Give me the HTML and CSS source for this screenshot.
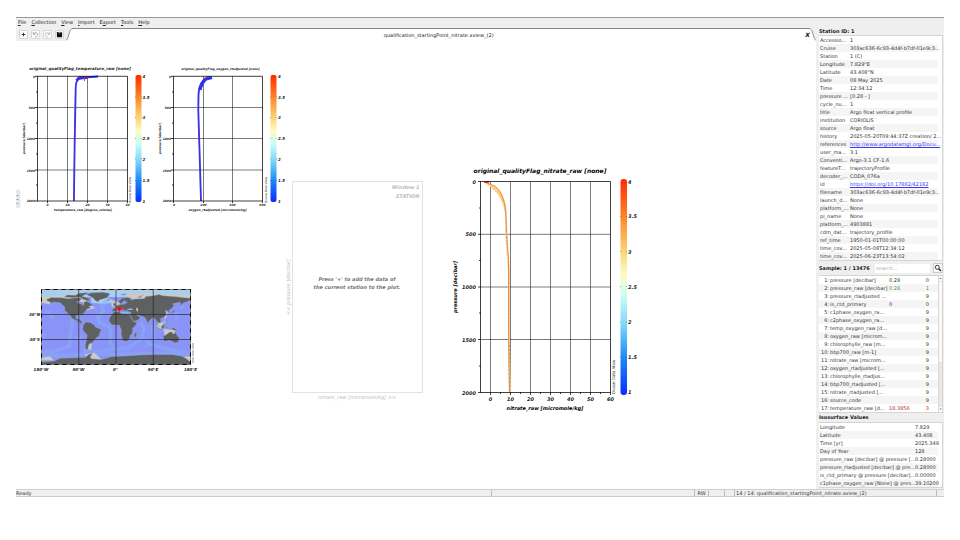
FILE: index.html
```
<!DOCTYPE html>
<html lang="en">
<head>
<meta charset="utf-8">
<title>qualification_startingPoint_nitrate.xview_(2)</title>
<link rel="stylesheet" href="styles.css">
</head>
<body>
<div class="app">
  <nav class="menubar">
    <a href="#"><u>F</u>ile</a><a href="#"><u>C</u>ollection</a><a href="#"><u>V</u>iew</a><a href="#"><u>I</u>mport</a><a href="#">E<u>x</u>port</a><a href="#"><u>T</u>ools</a><a href="#"><u>H</u>elp</a>
  </nav>
  <div class="work">
    <main class="main">
      <div class="toolbar">
        <button class="tool" aria-label="New"><svg viewBox="0 0 8 8"><path d="M4 2v4M2 4h4" stroke="#222" fill="none"/></svg></button>
        <button class="tool" aria-label="Undo"><svg viewBox="0 0 8 8"><path d="M2 3.600C3 1.200 6.500 1.600 6.500 4S4.500 6.800 3.500 6.800M1.500 1.300v2.500h2.500" stroke="#888" stroke-width=".8" fill="none"/></svg></button>
        <button class="tool" aria-label="Redo"><svg viewBox="0 0 8 8"><path d="M6 3.600C5 1.200 1.500 1.600 1.500 4S3.500 6.800 4.500 6.800M6.500 1.300v2.500h-2.500" stroke="#a8a8a8" stroke-width=".8" fill="none"/></svg></button>
        <button class="tool" aria-label="Save"><svg viewBox="0 0 8 8"><path d="M1 1h5l1 1v5H1z" fill="#111"/><path d="M2.700 1h2.600v1.600H2.700z" fill="#999"/></svg></button>
        <svg class="slope" viewBox="0 0 6 13"><path d="M0 13Q2 11 3 5T6 .5V13z" fill="#fff"/><path d="M0 12.500Q2 11 3 6T6 .5" fill="none" stroke="#777" stroke-width=".8"/></svg>
        <div class="tab"><span>qualification_startingPoint_nitrate.xview_(2)</span><button class="close" aria-label="Close view">X</button></div>
        <svg class="slope" viewBox="0 0 6 13"><path d="M6 13Q4 11 3 5T0 .5V13z" fill="#fff"/><path d="M6 12.500Q4 11 3 6T0 .5" fill="none" stroke="#777" stroke-width=".8"/></svg>
      </div>
      <svg class="canvas" viewBox="16 41 800 448" role="img" aria-label="Station plots and map">
        <defs>
          <linearGradient id="flag" x1="0" y1="0" x2="0" y2="1">
            <stop offset="0" stop-color="#ff2a00"/><stop offset=".17" stop-color="#fb8428"/><stop offset=".33" stop-color="#fbd273"/><stop offset=".44" stop-color="#fdfbc4"/><stop offset=".54" stop-color="#c8fff5"/><stop offset=".67" stop-color="#80d8fb"/><stop offset=".83" stop-color="#1a8af5"/><stop offset="1" stop-color="#0a2cff"/>
          </linearGradient>
        </defs>

        <!-- temperature -->
        <g class="plot small">
          <text class="title" x="80" y="70">original_qualityFlag_temperature_raw [none]</text>
          <path class="grid" d="M47.500 76v125M67.500 76v125M87.500 76v125M107.500 76v125M37.500 107.500h90M37.500 138.500h90M37.500 170h90"/>
          <path d="M98 76.500L84 77.500L79 79Q75.900 80 75.700 88L74.700 140L73.900 201" class="blue"/>
          <path d="M87 77.500L79 78L76.500 80.500" class="blue wide"/>
          <path d="M90 77H79Q75.500 79 75.500 88L74.800 120L74.100 201M84.500 76v5" class="redline"/>
          <path d="M79 76.500h11M84.500 76v5" class="redpeak"/>
          <path class="frame" d="M37.500 76.300h90v124.700h-90zM35 76.300h3M35 107.500h3M35 138.500h3M35 170h3M35 201h3M36 92h2M36 123h2M36 154h2M36 185h2M47.500 201v2M67.500 201v2M87.500 201v2M107.500 201v2M127.500 201v2"/>
          <g class="ylab"><text x="35" y="77.500">0</text><text x="35" y="109">500</text><text x="35" y="140">1000</text><text x="35" y="171.500">1500</text><text x="35" y="202">2000</text></g>
          <g class="xlab"><text x="47.500" y="206">0</text><text x="67.500" y="206">10</text><text x="87.500" y="206">20</text><text x="107.500" y="206">30</text><text x="127.500" y="206">40</text></g>
          <text class="axis" x="83" y="211">temperature_raw [degree_celsius]</text>
          <text class="axis" transform="translate(25 138.500) rotate(-90)">pressure [decibar]</text>
          <text class="credit" transform="translate(131 190) rotate(-90)">Ocean Data View</text>
          <rect class="bar" x="135.500" y="75" width="6" height="127" rx="2"/>
          <path class="ticks" d="M135 97h7M135 117.500h7M135 138.500h7M135 159h7M135 180.500h7"/>
          <g class="clab"><text x="142.500" y="78">4</text><text x="142.500" y="98.500">3.5</text><text x="142.500" y="119">3</text><text x="142.500" y="140">2.5</text><text x="142.500" y="161">2</text><text x="142.500" y="182">1.5</text><text x="142.500" y="202.500">1</text></g>
        </g>

        <!-- oxygen -->
        <g class="plot small">
          <text class="title minor" x="220.500" y="70">original_qualityFlag_oxygen_rtadjusted [none]</text>
          <path class="grid" d="M203.500 76v125M232.500 76v125M173.500 107.500h89M173.500 138.500h89M173.500 170h89"/>
          <path d="M209 76.500Q198.800 81 198.500 94L198.300 110L199.500 150L201 201" class="blue"/>
          <path d="M212 77.500L206 79Q202 82 200 90" class="blue wide"/>
          <path d="M209 77Q199.500 82 198.800 95L198.300 115L199.500 150L200.800 201" class="redline"/>
          <path d="M205 77.500L210 76.500" class="redpeak"/>
          <path class="frame" d="M173.500 76.300h89v124.700h-89zM171 76.300h3M171 107.500h3M171 138.500h3M171 170h3M171 201h3M172 92h2M172 123h2M172 154h2M172 185h2M173.500 201v2M203.500 201v2M232.500 201v2M262.500 201v2"/>
          <g class="ylab"><text x="171" y="77.500">0</text><text x="171" y="109">500</text><text x="171" y="140">1000</text><text x="171" y="171.500">1500</text><text x="171" y="202">2000</text></g>
          <g class="xlab"><text x="174" y="206">0</text><text x="203.500" y="206">200</text><text x="232.500" y="206">400</text><text x="262.500" y="206">600</text></g>
          <text class="axis" x="217.500" y="211">oxygen_rtadjusted [micromole/kg]</text>
          <text class="axis" transform="translate(160.500 138.500) rotate(-90)">pressure [decibar]</text>
          <text class="credit" transform="translate(266.500 190) rotate(-90)">Ocean Data View</text>
          <rect class="bar" x="270.500" y="75" width="6" height="127" rx="2"/>
          <path class="ticks" d="M270 97h7M270 117.500h7M270 138.500h7M270 159h7M270 180.500h7"/>
          <g class="clab"><text x="278" y="78">4</text><text x="278" y="98.500">3.5</text><text x="278" y="119">3</text><text x="278" y="140">2.5</text><text x="278" y="161">2</text><text x="278" y="182">1.5</text><text x="278" y="202.500">1</text></g>
        </g>

        <!-- empty plot window -->
        <g class="ghost">
          <rect x="292.500" y="181.500" width="130" height="211" fill="none" stroke="#e2e2e2"/>
          <text class="end" x="419.500" y="189">Window 1</text>
          <text class="end" x="419.500" y="198">STATION</text>
          <text class="hint" x="357" y="280.500">Press '+' to add the data of</text>
          <text class="hint" x="357" y="288.500">the current station to the plot.</text>
          <text class="name" x="357" y="399">nitrate_raw [micromole/kg] &gt;&gt;</text>
          <text class="name" transform="translate(289.500 287) rotate(-90)">&lt;&lt; pressure [decibar]</text>
        </g>

        <!-- nitrate -->
        <g class="plot large">
          <text class="title" x="540" y="173">original_qualityFlag_nitrate_raw [none]</text>
          <path class="grid" d="M490.500 182v210M510.500 182v210M530.500 182v210M550.500 182v210M570.500 182v210M590.500 182v210M480.500 234.300h130M480.500 287h130M480.500 339.500h130"/>
          <path d="M486 182.500Q489 186 494 188.500Q502 198 505.500 213Q507 201 500.500 191Q496 185 486 182.500z" fill="#f6dc85"/>
          <path d="M487 183L492 187Q505 198 506 215L506.500 240L509 270L509 345L510 392" fill="none" stroke="#f8cf85" stroke-width="2" stroke-dasharray="3 .5"/>
          <path d="M485 182.500L495 186Q504 194 505.500 210L507 240L508.500 260L508.600 345L509.500 392" fill="none" stroke="#ee7442" stroke-width=".8"/>
          <path d="M509.300 345V392" stroke="#bda550" stroke-width="1" stroke-dasharray="2 2"/>
          <path d="M484 182h5" stroke="#f33a20" stroke-width="2"/>
          <path class="frame" d="M480.500 181.500h130v211h-130zM478 181.500h3M478 234.300h3M478 287h3M478 339.500h3M478 392.500h3M479 208h2M479 260.500h2M479 313h2M479 366h2M490.500 392v3M500.500 392v2M510.500 392v3M520.500 392v2M530.500 392v3M540.500 392v2M550.500 392v3M560.500 392v2M570.500 392v3M580.500 392v2M590.500 392v3M600.500 392v2M610.500 392v3"/>
          <g class="ylab"><text x="476" y="183.500">0</text><text x="476" y="236">500</text><text x="476" y="289">1000</text><text x="476" y="341.500">1500</text><text x="476" y="394.500">2000</text></g>
          <g class="xlab"><text x="490.500" y="400.500">0</text><text x="510.500" y="400.500">10</text><text x="530.500" y="400.500">20</text><text x="550.500" y="400.500">30</text><text x="570.500" y="400.500">40</text><text x="590.500" y="400.500">50</text><text x="610.500" y="400.500">60</text></g>
          <text class="axis" x="545" y="409.500">nitrate_raw [micromole/kg]</text>
          <text class="axis" transform="translate(456.500 287) rotate(-90)">pressure [decibar]</text>
          <text class="credit" transform="translate(615 377) rotate(-90)">Ocean Data View</text>
          <rect class="bar" x="620.500" y="179" width="6.500" height="216" rx="3"/>
          <path class="ticks" d="M620 216.500h8M620 251.500h8M620 286.500h8M620 322h8M620 357h8"/>
          <g class="clab"><text x="628" y="183.500">4</text><text x="628" y="218">3.5</text><text x="628" y="253.500">3</text><text x="628" y="288.500">2.5</text><text x="628" y="324">2</text><text x="628" y="359">1.5</text><text x="628" y="394">1</text></g>
        </g>

        <!-- world map, drawn in degrees -->
        <svg x="41.500" y="289.500" width="149" height="75" viewBox="-180 -90 360 180" preserveAspectRatio="none">
          <rect x="-180" y="-90" width="360" height="180" fill="#8a93f8"/>
          <path d="M-180 -90H180V-72H-180zM-60 -70L-20 -70L0 -60L-30 -55L-60 -58z" fill="#a9cfee"/>
          <g fill="none" stroke="#86aef6" stroke-width="9" stroke-linejoin="round" opacity=".5">
            <path d="M-20 -65L-35 -52L-30 -38L-44 -25L-42 -12L-15 0L-13 20L-14 40L-5 54L30 50L60 30L68 5L60 -12M68 25L80 40L110 50L150 58L180 64M-180 62L-140 56L-112 45L-110 15L-104 -5L-108 -20M-80 55L-40 60L-10 54M-150 -20L-170 -40M-178 30L-172 15M90 30L88 -5M150 -20L143 -35M165 -50L155 -45M-84 25L-100 28"/>
            <path d="M-180 68L-100 68L-60 62L0 66L180 62" stroke-width="9"/>
          </g>
          <path d="M-20 -65L-35 -52L-30 -38L-44 -25L-42 -12L-15 0L-13 20L-14 40M60 30L68 5L60 -12M-112 45L-110 15M60 50L80 40L110 50" fill="none" stroke="#7fd0f5" stroke-width="1.500" stroke-dasharray="5 4" opacity=".7"/>
          <path d="M20 -78L60 -82L110 -80L180 -76V-68L100 -70L40 -66zM-180 -72L-130 -75L-100 -82L-80 -76L-70 -60L-50 -45L-75 -40L-80 -60L-180 -60zM100 -12L120 -10L115 -30L126 -40L122 -25L108 5L98 0zM115 5L145 8L140 20L118 22zM-66 35L-58 42L-60 54L-68 56zM-180 74L-160 70L-150 80H-180zM-75 66L-52 62L-35 78L-70 82zM155 72L180 70V82H150zM-12 -60L8 -62L10 -50L-10 -48zM-180 -72L-162 -72L-158 -54L-180 -58z" fill="#d1c8c2"/>
          <g fill="#5f6061" stroke="#8fb4cf" stroke-width="1">
            <path d="M-168 -66L-156 -71L-130 -70L-115 -68L-95 -71L-82 -68L-86 -65L-94 -60L-92 -57L-82 -55L-79 -51L-77 -60L-72 -62L-65 -59L-56 -52L-66 -49L-60 -46L-70 -43L-76 -35L-81 -31L-80 -25L-83 -29L-90 -30L-97 -27L-97 -21L-91 -18L-87 -21L-88 -16L-83 -15L-83 -10L-78 -8L-84 -8L-92 -14L-105 -20L-112 -29L-117 -33L-124 -40L-124 -48L-135 -58L-150 -60L-160 -56L-158 -60L-165 -62z"/>
            <path d="M-125 -72L-118 -77L-98 -76L-90 -81L-65 -83L-76 -77L-82 -74L-70 -70L-62 -66L-68 -63L-78 -66L-88 -72L-105 -70z"/>
            <path d="M-72 -78L-60 -82L-30 -83.500L-14 -80L-22 -70L-40 -65L-44 -60L-52 -65L-55 -70L-68 -76z"/>
            <path d="M-77 -8L-72 -12L-62 -11L-52 -5L-50 0L-44 2.500L-35 6L-39 14L-41 22L-48 26L-54 34L-58 38L-65 41L-68 50L-66 55L-74 52L-74 42L-71 30L-70 18L-76 14L-81 5L-80 -1z"/>
            <path d="M-9 -37L-2 -37L3 -42L8 -44L15 -38L18 -40L13 -45L20 -41L23 -37L26 -41L28 -37L36 -36L34 -28L43 -13L52 -16L59 -22L56 -25L50 -29L57 -27L66 -25L72 -20L77 -8L80 -14L88 -22L92 -22L97 -16L99 -8L103 -1L101 -7L100 -13L105 -9L109 -12L107 -20L115 -23L121 -28L121 -35L118 -39L124 -39L126 -35L129 -37L128 -40L135 -45L141 -53L136 -55L155 -60L156 -51L163 -58L170 -60L179 -64L179 -69L160 -71L140 -73L113 -75L104 -78L90 -75L72 -73L68 -68L45 -67L40 -65L33 -67L40 -67L28 -71L15 -69L5 -61L8 -58L12 -56L18 -62L22 -65L22 -60L28 -60L21 -55L10 -54L4 -52L-2 -49L0 -46L-9 -43z"/>
            <path d="M-6 -36L10 -37L11 -33L20 -31L32 -31L37 -22L43 -12L51 -12L48 -5L40 3L40 14L35 20L33 27L27 34L19 35L15 27L12 17L13 8L9 -1L8 -4L-4 -5L-9 -5L-17 -14L-16 -22L-10 -30z"/>
            <path d="M44 17L49 13L50 16L47 25L44 24zM114 22L122 18L130 12L136 12L137 16L141 17L143 11L147 19L153 27L150 37L141 38L135 34L129 32L116 35z"/>
            <path d="M-5 -50L1 -52L-4 -58L-7 -56zM-23 -64L-15 -64L-18 -67zM131 -31L141 -36L142 -44L137 -37zM109 -1L117 -6L117 2L111 3zM95 -5L105 4L115 8L105 6zM132 1L141 3L150 9L140 8zM168 46L177 38L174 42zM52 -71L66 -77L58 -71zM12 -78L26 -80L18 -76zM120 -1L124 0L121 5zM121 -18L126 -8L122 -11zM-84 -22L-74 -20L-78 -22z"/>
            <path d="M-180 84L-150 82L-135 75L-100 74L-75 73L-66 66L-57 63L-62 72L-60 76L-35 78L-10 71L30 69L60 67L90 66L135 66L160 70L170 76L180 84V90H-180z"/>
          </g>
          <path d="M48 -45L52 -46L54 -38L50 -38z" fill="#c8c4be"/>
          <path d="M28 -42L40 -42L36 -44zM12 -35L30 -34" fill="#80c8f5" stroke="#80c8f5" stroke-width="2"/>
          <path d="M-90 -90V90M0 -90V90M90 -90V90M-180 -30H180M-180 30H180" stroke="#222" stroke-width="1.600"/>
          <path d="M-3 -43H20M8 -50V-34" stroke="#f33" stroke-width="2"/><path d="M3 -43l5 -5l5 5l-5 5z" fill="#f00"/>
        </svg>
        <rect x="41.500" y="289.500" width="149" height="75" fill="none" stroke="#000"/>
        <rect x="41.500" y="289.500" width="149" height="75" fill="none" stroke="#ccc" stroke-width=".6" stroke-dasharray="4 4"/>
        <path d="M193 343V363" stroke="#777" stroke-width=".8" stroke-dasharray="6 1"/>
        <g class="plot map"><text class="end" x="40" y="316">30°N</text><text class="end" x="40" y="341">30°S</text>
          <text x="41" y="370.500">180°W</text><text x="78.500" y="370.500">90°W</text><text x="115.500" y="370.500">0°</text><text x="153" y="370.500">90°E</text><text x="190.500" y="370.500">180°E</text></g>

        <!-- drawer handle -->
        <rect x="15" y="190" width="5" height="17.500" rx="1" fill="#e6eaee" stroke="#d3d8dd" stroke-width=".5"/>
        <path d="M17.500 195v9" stroke="#7c8894" stroke-width="1.500" stroke-dasharray="1 3"/>
      </svg>
    </main>

    <aside class="side">
      <h2>Station ID: 1</h2>
      <div class="panel station">
        <table>
          <tr><td>Accessio...</td><td>1</td></tr>
          <tr><td>Cruise</td><td>303ac636-6c93-4d4f-b7df-01e9c3...</td></tr>
          <tr><td>Station</td><td>1 (C)</td></tr>
          <tr><td>Longitude</td><td>7.829°E</td></tr>
          <tr><td>Latitude</td><td>43.408°N</td></tr>
          <tr><td>Date</td><td>08 May 2025</td></tr>
          <tr><td>Time</td><td>12:34:12</td></tr>
          <tr><td>pressure ...</td><td>[0.28 - ]</td></tr>
          <tr><td>cycle_nu...</td><td>1</td></tr>
          <tr><td>title</td><td>Argo float vertical profile</td></tr>
          <tr><td>institution</td><td>CORIOLIS</td></tr>
          <tr><td>source</td><td>Argo float</td></tr>
          <tr><td>history</td><td>2025-05-20T09:44:37Z creation/ 2...</td></tr>
          <tr><td>references</td><td><a href="#">http://www.argodatamgt.org/Docu...</a></td></tr>
          <tr><td>user_ma...</td><td>3.1</td></tr>
          <tr><td>Conventi...</td><td>Argo-3.1 CF-1.6</td></tr>
          <tr><td>featureT...</td><td>trajectoryProfile</td></tr>
          <tr><td>decoder_...</td><td>CODA_076a</td></tr>
          <tr><td>id</td><td><a href="#">https://doi.org/10.17882/42182</a></td></tr>
          <tr><td>filename</td><td>303ac636-6c93-4d4f-b7df-01e9c3...</td></tr>
          <tr><td>launch_d...</td><td>None</td></tr>
          <tr><td>platform_...</td><td>None</td></tr>
          <tr><td>pi_name</td><td>None</td></tr>
          <tr><td>platform_...</td><td>4903881</td></tr>
          <tr><td>cdm_dat...</td><td>trajectory_profile</td></tr>
          <tr><td>ref_time</td><td>1950-01-01T00:00:00</td></tr>
          <tr><td>time_cov...</td><td>2025-05-08T12:34:12</td></tr>
          <tr><td>time_cov...</td><td>2025-06-23T13:54:02</td></tr>
        </table>
      </div>
      <div class="samplehead">
        <h2>Sample: 1 / 13476</h2>
        <input type="text" placeholder="search..." aria-label="Search variables">
        <button aria-label="Search"><svg viewBox="0 0 8 8"><circle cx="3.300" cy="3.300" r="2" fill="#fff" stroke="#222" stroke-width=".9"/><path d="M4.800 4.800L7 7" stroke="#222" stroke-width="1.300"/></svg></button>
      </div>
      <div class="panel samples">
        <table>
          <tr><td>1:</td><td>pressure [decibar]</td><td>0.28</td><td>0</td></tr>
          <tr class="good"><td>2:</td><td>pressure_raw [decibar]</td><td>0.28</td><td>1</td></tr>
          <tr><td>3:</td><td>pressure_rtadjusted ...</td><td></td><td>9</td></tr>
          <tr><td>4:</td><td>is_ctd_primary</td><td>0</td><td>0</td></tr>
          <tr><td>5:</td><td>c1phase_oxygen_ra...</td><td></td><td>9</td></tr>
          <tr><td>6:</td><td>c2phase_oxygen_ra...</td><td></td><td>9</td></tr>
          <tr><td>7:</td><td>temp_oxygen_raw [d...</td><td></td><td>9</td></tr>
          <tr><td>8:</td><td>oxygen_raw [microm...</td><td></td><td>9</td></tr>
          <tr><td>9:</td><td>chlorophylle_raw [m...</td><td></td><td>9</td></tr>
          <tr><td>10:</td><td>bbp700_raw [m-1]</td><td></td><td>9</td></tr>
          <tr><td>11:</td><td>nitrate_raw [microm...</td><td></td><td>9</td></tr>
          <tr><td>12:</td><td>oxygen_rtadjusted [...</td><td></td><td>9</td></tr>
          <tr><td>13:</td><td>chlorophylle_rtadjus...</td><td></td><td>9</td></tr>
          <tr><td>14:</td><td>bbp700_rtadjusted [...</td><td></td><td>9</td></tr>
          <tr><td>15:</td><td>nitrate_rtadjusted [...</td><td></td><td>9</td></tr>
          <tr><td>16:</td><td>source_code</td><td></td><td>9</td></tr>
          <tr class="bad"><td>17:</td><td>temperature_raw [d...</td><td>18.3856</td><td>3</td></tr>
        </table>
        <div class="scroll"><i>▴</i><b></b><i>▾</i></div>
      </div>
      <h2>Isosurface Values</h2>
      <div class="panel iso">
        <table>
          <tr><td>Longitude</td><td>7.829</td></tr>
          <tr><td>Latitude</td><td>43.408</td></tr>
          <tr><td>Time [yr]</td><td>2025.349</td></tr>
          <tr><td>Day of Year</td><td>128</td></tr>
          <tr><td>pressure_raw [decibar] @ pressure [...</td><td>0.28000</td></tr>
          <tr><td>pressure_rtadjusted [decibar] @ pre...</td><td>0.28000</td></tr>
          <tr><td>is_ctd_primary @ pressure [decibar]...</td><td>0.00000</td></tr>
          <tr><td>c1phase_oxygen_raw [None] @ pres...</td><td>39.10200</td></tr>
        </table>
      </div>
    </aside>
  </div>
  <footer class="status">
    <span class="ready">Ready</span><span class="message"></span><span class="mode">RW</span><span class="flagcell"></span><span class="spare"></span><span class="file">14 / 14: qualification_startingPoint_nitrate.xview_(2)</span>
  </footer>
</div>
</body>
</html>
```
FILE: styles.css
```
* { box-sizing: border-box; }
body { margin: 0; background: #fff; color: #333; font: 5px/8px "DejaVu Sans", sans-serif; }
.app { margin: 17px 16px 0; background: #efefef; border-top: 1px solid #999; }
.menubar { display: flex; gap: 5px; padding: 0 2px; height: 10px; }
.menubar a { color: #222; text-decoration: none; }
.work { display: flex; }
.main { flex: 1; min-width: 0; }

.toolbar { display: flex; align-items: center; height: 13px; }
.tool { flex: none; width: 9px; height: 9px; margin-left: 3px; padding: 0; border: 1px solid #d8d8d8; border-radius: 1px; background: #fdfdfd; }
.tool svg { display: block; width: 100%; height: 100%; overflow: visible; }
.slope { flex: none; width: 6px; height: 13px; margin-left: 2px; }
.tab + .slope { margin-left: 0; }
.tab { flex: 1; display: flex; align-items: center; height: 13px; border-top: 1px solid #888; background: #fff; color: #222; }
.tab span { flex: 1; text-align: center; }
.close { padding: 0; border: 0; background: none; color: #111; font: italic bold 6px/8px "DejaVu Sans", sans-serif; }

.canvas { display: block; width: 100%; height: auto; background: #fff; }
.plot text { font-weight: bold; font-style: italic; fill: #222; text-anchor: middle; }
.large { font-size: 5px; }
.large .title { font-size: 6px; fill: #000; }
.large .axis { fill: #000; }
.small { font-size: 3px; }
.small .title, .small .clab, .map { font-size: 4px; }
.small .minor { font-size: 3px; }
.plot .ylab text, .plot .end { text-anchor: end; }
.plot .clab text { text-anchor: start; }
.plot .credit { font-size: 3px; font-weight: normal; font-style: normal; }
.grid { fill: none; stroke: #222; stroke-width: .6; }
.frame { fill: none; stroke: #111; stroke-width: .8; }
.bar { fill: url(#flag); }
.ticks { fill: none; stroke: #333; stroke-width: .4; stroke-dasharray: 1 5 1; }
.blue { fill: none; stroke: #1c34ff; stroke-width: 1.800; }
.blue.wide { stroke-width: 3; }
.redline { fill: none; stroke: #c8205c; stroke-width: .4; stroke-dasharray: 8 1; }
.redpeak { fill: none; stroke: #f02838; stroke-width: .8; }
.ghost text { font-size: 5px; font-style: italic; font-weight: bold; fill: #bdbdbd; text-anchor: middle; }
.ghost .end { text-anchor: end; }
.ghost .hint { fill: #777; }
.ghost .name { font-weight: normal; }
.large .credit { font-size: 4px; }

.side { flex: none; width: 128px; padding: 0 1px 0 3px; }
h2 { margin: 0; font: bold 5px/7px "DejaVu Sans", sans-serif; color: #222; }
.panel { background: #fff; border: 1px solid #d5d5d5; border-width: 1px 1px 1px 0; overflow: hidden; }
table { width: 119px; border-collapse: collapse; table-layout: fixed; }
td { padding: 0; height: 8px; white-space: nowrap; }
tr:nth-child(even) { background: #f5f5f5; }
td a { color: #3a3af0; }
.station td:first-child { width: 31px; padding-left: 1px; }
.samplehead { display: flex; align-items: center; height: 14px; gap: 3px; }
.samplehead h2 { width: 53px; }
.samplehead input { flex: 1; min-width: 0; height: 9px; padding: 0 1px; border: 0; background: #fff; font: inherit; }
.samplehead input::placeholder { color: #aaa; }
.samplehead button { width: 10px; height: 10px; padding: 0; border: 1px solid #ccc; background: #fafafa; }
.samplehead button svg { display: block; width: 100%; height: 100%; }
.samples { display: flex; }
.samples td:nth-child(1) { width: 10px; text-align: right; }
.samples td:nth-child(2) { width: 60px; padding-left: 1px; }
.samples td:nth-child(3) { width: 30px; }
.samples td:nth-child(4) { text-align: right; padding-right: 9px; }
.good td:nth-child(n+3) { color: #2fa52f; }
.bad td:nth-child(n+3) { color: #c42b2b; }
.scroll { flex: 1; display: flex; flex-direction: column; background: #e8e8e8; border-left: 1px solid #d8d8d8; }
.scroll i { height: 5px; line-height: 5px; font-style: normal; font-size: 3px; text-align: center; background: #fff; }
.scroll b { height: 82px; background: #fafafa; border: 1px solid #ddd; border-left: 0; border-right: 0; margin-bottom: auto; }
.samples + h2 { line-height: 9px; }
.iso td:first-child { width: 96px; padding-left: 1px; }

.status { display: flex; height: 8px; padding-right: 7px; border-top: 1px solid #d0d0d0; border-bottom: 1px solid #ccc; line-height: 6px; }
.status span { border-right: 1px solid #bbb; white-space: nowrap; }
.ready { flex: 476; }
.message { flex: 203; }
.mode { flex: 0 0 14px; text-align: center; }
.flagcell { flex: 0 0 16px; }
.spare { flex: 0 0 10px; }
.file { flex: 0 0 202px; padding-left: 1px; }
```
